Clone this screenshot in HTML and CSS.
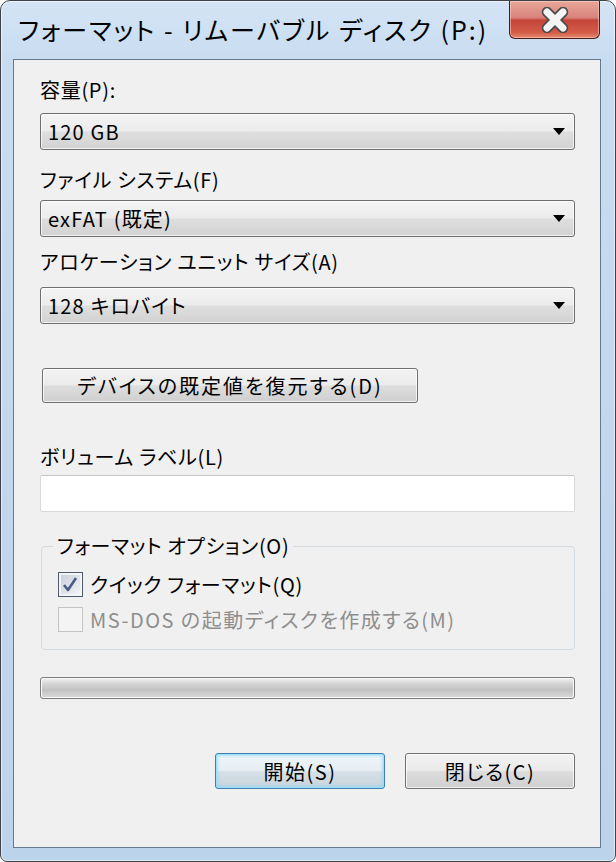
FILE: index.html
```html
<!DOCTYPE html>
<html lang="ja">
<head>
    <meta charset="UTF-8">
    <meta name="viewport" content="width=device-width, initial-scale=1.0">
    <title>フォーマット - リムーバブル ディスク (P:)</title>
    <link rel="stylesheet" href="styles.css">
</head>
<body>
    <div class="window">
        <div class="titlebar">
            <div class="title">フォーマット - リムーバブル ディスク (P:)</div>
            <div class="close-btn">
                <svg width="36" height="26" viewBox="0 0 36 26">
                    <path d="M10 5 L26 21 M26 5 L10 21" stroke="#4a4a4a" stroke-width="10.5" stroke-linecap="round" fill="none"/>
                    <path d="M10 5 L26 21 M26 5 L10 21" stroke="#f4f4f4" stroke-width="7" stroke-linecap="round" fill="none"/>
                </svg>
            </div>
        </div>

        <div class="client">
            <div class="label lbl-size">容量(P):</div>
            <div class="combo combo-size">
                <span>120 GB</span>
                <span class="arrow"></span>
            </div>

            <div class="label lbl-fs">ファイル システム(F)</div>
            <div class="combo combo-fs">
                <span>exFAT (既定)</span>
                <span class="arrow"></span>
            </div>

            <div class="label lbl-alloc">アロケーション ユニット サイズ(A)</div>
            <div class="combo combo-alloc">
                <span>128 キロバイト</span>
                <span class="arrow"></span>
            </div>

            <div class="btn restore-btn">デバイスの既定値を復元する(D)</div>

            <div class="label lbl-vol">ボリューム ラベル(L)</div>
            <div class="textbox"></div>

            <fieldset class="options">
                <legend>フォーマット オプション(O)</legend>
                <div class="check-row">
                    <span class="checkbox checked">
                        <svg width="17" height="17" viewBox="0 0 17 17">
                            <path d="M2 9 L6 14 L14 2" stroke="#4a5b85" stroke-width="2.6" fill="none" stroke-linejoin="round"/>
                        </svg>
                    </span>
                    <span class="check-text">クイック フォーマット(Q)</span>
                </div>
                <div class="check-row disabled">
                    <span class="checkbox"></span>
                    <span class="check-text">MS-DOS の起動ディスクを作成する(M)</span>
                </div>
            </fieldset>

            <div class="progress"></div>

            <div class="actions">
                <div class="btn action-btn focused">開始(S)</div>
                <div class="btn action-btn">閉じる(C)</div>
            </div>
        </div>
    </div>
</body>
</html>
```

FILE: styles.css
```css
body {
    margin: 0;
    background: #ffffff;
    font-family: "Noto Sans CJK JP", "Noto Sans", sans-serif;
    font-feature-settings: "palt";
    color: #000;
}
.window {
    width: 616px;
    height: 862px;
    box-sizing: border-box;
    border: 1px solid #3e4248;
    border-radius: 10px 10px 7px 7px;
    background: linear-gradient(to bottom, #d4e4f5 0, #c8dcf1 60px, #bcd3ec 100%);
    box-shadow: inset 0 0 0 1px rgba(255, 255, 255, 0.55);
    padding: 0 14px 13px 12px;
    display: flex;
    flex-direction: column;
}
.titlebar {
    height: 58px;
    display: flex;
    justify-content: space-between;
    align-items: flex-start;
}
.title {
    font-size: 25px;
    line-height: 30px;
    margin-top: 13px;
    padding-left: 5px;
    letter-spacing: 2px;
}
.close-btn {
    width: 91px;
    height: 38px;
    box-sizing: border-box;
    margin-right: 1px;
    border: 1px solid #4a1d18;
    border-top: none;
    border-radius: 0 0 6px 6px;
    background: linear-gradient(to bottom, #e8a79a 0, #d9837a 45%, #c4453a 52%, #d35c48 85%, #e48a6c 100%);
    box-shadow: inset 0 0 0 1px rgba(255, 220, 210, 0.5);
    display: flex;
    align-items: center;
    justify-content: center;
}
.client {
    flex: 1;
    border: 1px solid #66788e;
    background: #f0f0f0;
    padding: 0 25px 0 26px;
    display: flex;
    flex-direction: column;
    letter-spacing: 0.7px;
}
.label {
    font-size: 20px;
    line-height: 24px;
}
.lbl-size { margin-top: 18px; }
.lbl-fs { margin-top: 18px; }
.lbl-alloc { margin-top: 13px; }
.lbl-vol { margin-top: 42px; }

.combo {
    height: 37px;
    box-sizing: border-box;
    border: 1px solid #6e6e6e;
    border-radius: 3px;
    background: linear-gradient(to bottom, #f4f4f4 0, #ececec 48%, #dedede 52%, #d2d2d2 100%);
    box-shadow: inset 0 0 0 1px rgba(255, 255, 255, 0.7);
    display: flex;
    align-items: center;
    justify-content: space-between;
    padding: 0 9px 0 7px;
    font-size: 20px;
    letter-spacing: 1.2px;
}
.combo-size { margin-top: 11px; }
.combo-fs { margin-top: 8px; }
.combo-alloc { margin-top: 13px; }
.arrow {
    width: 0;
    height: 0;
    border-left: 6px solid transparent;
    border-right: 6px solid transparent;
    border-top: 7px solid #000;
}

.btn {
    box-sizing: border-box;
    border: 1px solid #707070;
    border-radius: 3px;
    background: linear-gradient(to bottom, #f2f2f2 0, #ebebeb 48%, #dddddd 52%, #cfcfcf 100%);
    box-shadow: inset 0 0 0 1px rgba(255, 255, 255, 0.75);
    display: flex;
    align-items: center;
    justify-content: center;
    font-size: 20px;
    letter-spacing: 1.5px;
}
.restore-btn {
    width: 376px;
    height: 35px;
    margin-top: 44px;
    margin-left: 2px;
    letter-spacing: 2px;
}

.textbox {
    height: 37px;
    box-sizing: border-box;
    margin-top: 6px;
    border: 1px solid #d7d9dc;
    border-top-color: #c4c6ca;
    border-radius: 2px;
    background: #ffffff;
}

.options {
    margin: 22px 0 0 1px;
    padding: 14px 16px 17px 16px;
    border: 1px solid #d3dbe1;
    border-radius: 4px;
}
.options legend {
    font-size: 20px;
    line-height: 24px;
    padding: 0 4px;
    margin-left: -5px;
}
.check-row {
    display: flex;
    align-items: center;
    gap: 7px;
    height: 25px;
    font-size: 20px;
}
.check-row + .check-row { margin-top: 10px; }
.checkbox {
    width: 25px;
    height: 25px;
    box-sizing: border-box;
    border: 1px solid #8f8f8f;
    background: linear-gradient(135deg, #dcdcdc 0, #f6f6f6 100%);
    box-shadow: inset 0 0 0 2px #f4f4f4;
    display: flex;
    align-items: center;
    justify-content: center;
}
.checkbox.checked {
    border-color: #4f5a6e;
    background: linear-gradient(135deg, #c6cdd8 0, #f4f6f9 100%);
}
.disabled .checkbox {
    border-color: #c4c4c4;
    background: #f4f4f4;
}
.disabled .check-text {
    color: #8e8e8e;
    letter-spacing: 1.5px;
}

.progress {
    height: 22px;
    box-sizing: border-box;
    margin-top: 27px;
    border: 1px solid #7c7c7c;
    border-radius: 3px;
    background: linear-gradient(to bottom, #f3f3f3 0, #d4d4d4 30%, #c2c2c2 60%, #dadada 100%);
    box-shadow: inset 0 0 0 1px #fafafa;
}

.actions {
    display: flex;
    justify-content: flex-end;
    gap: 20px;
    margin-top: 54px;
}
.action-btn {
    width: 170px;
    height: 36px;
}
.action-btn.focused {
    border-color: #3c7fb1;
    background: linear-gradient(to bottom, #f0f6fa 0, #e6eef3 48%, #d6e0e6 52%, #c8d4dc 100%);
    box-shadow: inset 0 0 0 1px #9ee0fb, inset 0 0 3px 2px rgba(120, 210, 250, 0.55);
}
```
